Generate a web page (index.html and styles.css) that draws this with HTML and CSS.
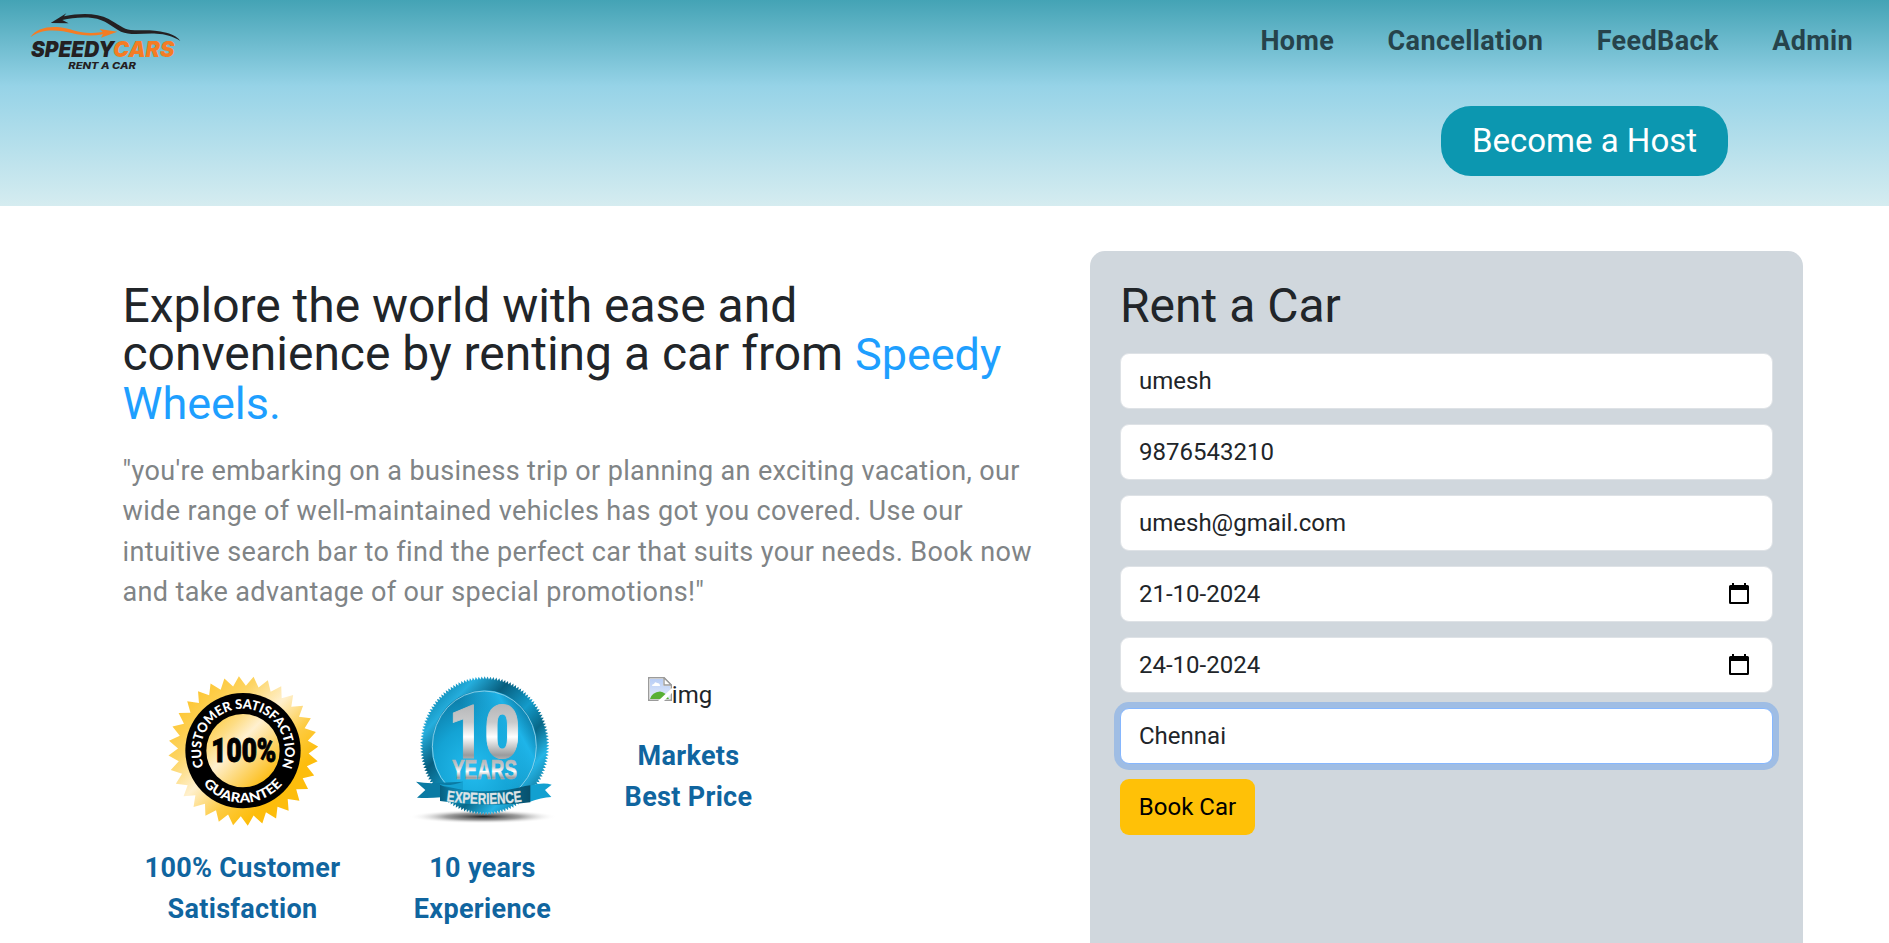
FILE: index.html
```html
<!DOCTYPE html>
<html lang="en">
<head>
<meta charset="utf-8">
<title>Speedy Cars</title>
<link rel="stylesheet" href="styles.css">
</head>
<body>
<header class="header">
  <nav class="nav">
    <svg class="logo" viewBox="84 30 468 189">
      <path d="M152 69L199 40L192 49C245 38 293 40 326 57C354 72 370 88 392 90C430 92 460 87 499 98C522 104 536 114 541 123C520 108 495 102 470 101C430 99 390 107 363 95C335 81 318 59 277 54C243 50 212 55 187 60L206 70Z" fill="#242022"/>
      <path d="M91 112C105 88 137 79 172 81C210 84 240 101 276 99C290 98 300 97 308 96L299 87L352 95L303 113L309 103C275 109 245 107 218 100C178 89 124 84 91 112Z" fill="#f57c24"/>
      <text class="logo-name" x="93" y="171" textLength="250" lengthAdjust="spacingAndGlyphs" fill="#242022">SPEEDY</text>
      <text class="logo-name" x="339" y="171" textLength="184" lengthAdjust="spacingAndGlyphs" fill="#f57c24">CARS</text>
      <text class="logo-sub" x="205" y="207" textLength="203" lengthAdjust="spacingAndGlyphs">RENT A CAR</text>
    </svg>
    <div class="links"><a>Home</a><a>Cancellation</a><a>FeedBack</a><a>Admin</a></div>
  </nav>
  <button class="host">Become a Host</button>
</header>
<main class="main">
  <section class="intro">
    <h1 class="title">Explore the world with ease and<br>convenience by renting a car from <span class="brand">Speedy<br>Wheels.</span></h1>
    <p class="lead">"you're embarking on a business trip or planning an exciting vacation, our<br>wide range of well-maintained vehicles has got you covered. Use our<br>intuitive search bar to find the perfect car that suits your needs. Book now<br>and take advantage of our special promotions!"</p>
    <div class="badges">
      <figure class="badge">
        <svg class="seal" viewBox="54 48 450 450">
          <defs>
            <linearGradient id="gold" x1="0" y1="0" x2="1" y2="1">
              <stop offset=".1" stop-color="#fdd050"/><stop offset=".25" stop-color="#fddc83"/><stop offset=".42" stop-color="#fff0cf"/><stop offset=".6" stop-color="#fddb83"/><stop offset=".85" stop-color="#fdbf1c"/>
            </linearGradient>
            <linearGradient id="rim" x1="0" y1="0" x2="1" y2="1">
              <stop offset=".15" stop-color="#fdc735"/><stop offset=".3" stop-color="#fdd461"/><stop offset=".46" stop-color="#fff0cd"/><stop offset=".62" stop-color="#fdcb41"/><stop offset=".75" stop-color="#fdbd0c"/>
            </linearGradient>
            <path id="arc-top" d="M162.200 319.200A126 126 0 1 1 394.100 323.200"/>
            <path id="arc-bottom" d="M159.500 372.300A156 156 0 0 0 398.500 372.300"/>
          </defs>
          <polygon id="star" fill="url(#rim)"/>
          <circle cx="279" cy="272" r="173" fill="#000"/>
          <circle cx="279" cy="272" r="110" fill="url(#gold)"/>
          <text class="seal-arc"><textPath href="#arc-top" textLength="494" lengthAdjust="spacingAndGlyphs">CUSTOMER SATISFACTION</textPath></text>
          <text class="seal-arc"><textPath href="#arc-bottom" textLength="271" lengthAdjust="spacingAndGlyphs">GUARANTEE</textPath></text>
          <text class="seal-number" x="184" y="306" textLength="195" lengthAdjust="spacingAndGlyphs">100%</text>
        </svg>
        <figcaption>100% Customer<br>Satisfaction</figcaption>
      </figure>
      <figure class="badge">
        <svg class="seal" viewBox="25 48 450 450">
          <defs>
            <linearGradient id="ring" x1="0" y1="0" x2="1" y2="1">
              <stop offset=".1" stop-color="#0b83ad"/><stop offset=".22" stop-color="#25aedd"/><stop offset=".36" stop-color="#075e7e"/><stop offset=".52" stop-color="#139bca"/><stop offset=".64" stop-color="#086888"/><stop offset=".76" stop-color="#26b5e6"/><stop offset=".9" stop-color="#086d90"/>
            </linearGradient>
            <radialGradient id="disc" cx=".4" cy=".7" r=".75">
              <stop offset="0" stop-color="#23bdf0"/><stop offset=".5" stop-color="#14a3d4"/><stop offset="1" stop-color="#0a7099"/>
            </radialGradient>
            <linearGradient id="glow" x1="0" y1=".8" x2="1" y2=".2">
              <stop offset=".5" stop-color="#20b9ee" stop-opacity="0"/><stop offset=".8" stop-color="#20b9ee" stop-opacity=".9"/><stop offset="1" stop-color="#0b82ae" stop-opacity=".2"/>
            </linearGradient>
            <linearGradient id="metal" x1="0" y1="0" x2="0" y2="1">
              <stop offset=".15" stop-color="#b3b4b6"/><stop offset=".38" stop-color="#c9cacb"/><stop offset=".55" stop-color="#fff"/><stop offset=".76" stop-color="#999b9d"/><stop offset=".9" stop-color="#d5d6d7"/>
            </linearGradient>
            <linearGradient id="ribbon">
              <stop offset="0" stop-color="#075f80"/><stop offset=".2" stop-color="#0f8ab5"/><stop offset=".5" stop-color="#0c7ba2"/><stop offset=".85" stop-color="#075e7f"/><stop offset="1" stop-color="#07506c"/>
            </linearGradient>
            <radialGradient id="shadow"><stop offset="0" stop-color="#222"/><stop offset=".5" stop-color="#777" stop-opacity=".7"/><stop offset="1" stop-color="#fff" stop-opacity="0"/></radialGradient>
          </defs>
          <ellipse cx="250" cy="470" rx="222" ry="21" fill="url(#shadow)"/>
          <polygon id="cog" fill="url(#ring)"/>
          <ellipse cx="254" cy="260" rx="158" ry="169" fill="url(#disc)"/>
          <ellipse cx="254" cy="260" rx="158" ry="169" fill="url(#glow)"/>
          <ellipse cx="254" cy="260" rx="156" ry="167" fill="none" stroke="#9bd6ea" stroke-width="2.500"/>
          <path d="M49 365Q85 372 124 368L190 365L190 388L124 412Q85 416 52 413L77 390Z" fill="#0b7ba4"/>
          <path d="M389 377Q432 366 456 374L436 390L455 411Q425 412 389 426Z" fill="#12a0d0"/>
          <path d="M121 373Q150 380 190 365L190 390L121 376Z" fill="#15a2d2"/>
          <path d="M121 374Q145 388 190 390Q300 401 376 378L392 376V427Q255 443 121 423Z" fill="url(#ribbon)"/>
          <text class="ten" x="146" y="294" textLength="216" lengthAdjust="spacingAndGlyphs">10</text>
          <text class="years" x="157" y="357" textLength="195" lengthAdjust="spacingAndGlyphs">YEARS</text>
          <path id="arc-exp" d="M140 424Q255 440 372 424" fill="none"/>
          <text class="exp"><textPath href="#arc-exp" textLength="228" lengthAdjust="spacingAndGlyphs">EXPERIENCE</textPath></text>
        </svg>
        <figcaption>10 years<br>Experience</figcaption>
      </figure>
      <figure class="badge">
        <div class="missing">
          <svg class="missing-icon" viewBox="0 0 24 24">
            <defs><linearGradient id="sky" x1="0" y1="0" x2="0" y2="1"><stop offset="0" stop-color="#b8cdf5"/><stop offset="1" stop-color="#e3ecfc"/></linearGradient></defs>
            <path d="M.7.7H16L23.300 8V23.300H.7Z" fill="#fff" stroke="#9b9b9b" stroke-width="1.400"/>
            <path d="M2 2H15V9H22V22H2Z" fill="url(#sky)"/>
            <path d="M4 9Q4 7 6 7Q7 4 9 6Q12 6 12 9Z" fill="#fff"/>
            <path d="M2 22Q4 15 12 14.500Q18 15 21 22Z" fill="#58b035"/>
            <path d="M16 .7V8H23.300Z" fill="#fff" stroke="#9b9b9b" stroke-width="1.400"/>
            <path d="M10 24L24 11V16L16 24Z" fill="#fff"/>
          </svg><span>img</span>
        </div>
        <figcaption>Markets<br>Best Price</figcaption>
      </figure>
    </div>
  </section>
  <form class="card">
    <h2 class="title">Rent a Car</h2>
    <div class="field">umesh</div>
    <div class="field">9876543210</div>
    <div class="field">umesh@gmail.com</div>
    <div class="field"><span>21-10-2024</span><svg class="cal" viewBox="0 0 20 21"><path d="M3 0H5V2H15V0H17V2H18.500Q20 2 20 3.500V19.500Q20 21 18.500 21H1.500Q0 21 0 19.500V3.500Q0 2 1.500 2H3ZM2 7V19H18V7Z" fill-rule="evenodd"/></svg></div>
    <div class="field"><span>24-10-2024</span><svg class="cal" viewBox="0 0 20 21"><path d="M3 0H5V2H15V0H17V2H18.500Q20 2 20 3.500V19.500Q20 21 18.500 21H1.500Q0 21 0 19.500V3.500Q0 2 1.500 2H3ZM2 7V19H18V7Z" fill-rule="evenodd"/></svg></div>
    <div class="field field-focus">Chennai</div>
    <button class="book" type="button">Book Car</button>
  </form>
</main>
<script src="badges.js"></script>
</body>
</html>
```
FILE: badges.js
```js
// Builds the toothed outline of a seal; inset is the depth of each notch.
function teeth(id, cx, cy, rx, ry, inset, count, phase) {
  const pts = [];
  for (let i = 0; i < count * 2; i++) {
    const a = phase * Math.PI / 180 + i * Math.PI / count;
    const d = i % 2 ? inset : 0;
    pts.push((cx + (rx - d) * Math.cos(a)).toFixed(1) + ',' + (cy + (ry - d) * Math.sin(a)).toFixed(1));
  }
  document.getElementById(id).setAttribute('points', pts.join(' '));
}
teeth('star', 280, 273, 225, 225, 29, 32, -93.4);
teeth('cog', 255, 257, 194, 208, 9, 136, -90);
```
FILE: styles.css
```css
* { box-sizing: border-box; }
body {
  margin: 0;
  height: 943px;
  overflow: hidden;
  background: #fff;
  color: #212529;
  font: 24px/36px Roboto, sans-serif;
}
.header {
  height: 206px;
  background: linear-gradient(#44a3b5 0, #96d3e7 86px, #d5ecf0 206px);
}
.nav {
  height: 86px;
  padding: 10px 36px 0 28px;
  display: flex;
  justify-content: space-between;
}
.logo { width: 156px; height: 63px; }
.logo-name { font: italic 900 64px Inter, sans-serif; }
.logo-sub { font: italic 800 28px Inter, sans-serif; fill: #242022; }
.links {
  display: flex;
  gap: 53.500px;
  padding-top: 11px;
  font-weight: 700;
  font-size: 27px;
  line-height: 40px;
  letter-spacing: .36px;
  color: #26434b;
}
.host {
  display: block;
  width: 287px;
  height: 70px;
  margin: 20px 161px 0 auto;
  padding: 0 0 2px;
  border: 0;
  border-radius: 30px;
  background: #0c97b0;
  color: #fff;
  font: 33px Roboto, sans-serif;
}
.main {
  display: grid;
  grid-template-columns: 967.5px 713px;
  padding: 45px 0 0 122.5px;
}
.intro { padding-top: 31px; }
.title {
  margin: 0;
  font-weight: 400;
  font-size: 48px;
  line-height: 48px;
  white-space: nowrap;
}
.brand { color: #1e9fff; font-size: 45px; }
.lead {
  margin: 22.5px 0 0;
  color: #808486;
  font-size: 27px;
  line-height: 40.5px;
  letter-spacing: .365px;
  white-space: nowrap;
}
.intro .title { letter-spacing: -.02px; }
.badges {
  display: grid;
  grid-template-columns: 240px 240px 172px;
  margin-top: 63.5px;
}
.badge { margin: 0; text-align: center; }
.seal { display: block; width: 150px; height: 150px; margin: 0 auto 22px; }
.badge figcaption {
  color: #10659f;
  font-weight: 700;
  font-size: 27px;
  line-height: 40.5px;
  letter-spacing: .32px;
}
.seal-arc { font: 900 40px Lato, sans-serif; fill: #fff; }
.seal-number { font: 900 101px Roboto, sans-serif; stroke: #000; stroke-width: 3px; }
.years, .exp { font-family: "Liberation Sans", sans-serif; font-weight: 700; fill: url(#metal); }
.ten { font: 900 222px Roboto, sans-serif; fill: url(#metal); stroke: url(#metal); stroke-width: 3px; }
.years { font-size: 81px; stroke: url(#metal); stroke-width: 2px; }
.exp { font-size: 47px; fill: #dfe4e7; stroke: #dfe4e7; stroke-width: 1px; }
.missing { display: flex; justify-content: center; height: 60px; padding-right: 17px; line-height: 38px; }
.missing-icon { width: 24px; height: 24px; margin-top: 1px; }
.card {
  height: 692px;
  padding: 31px 30px 0;
  border-radius: 15px 15px 0 0;
  background: #d0d7dd;
}
.card .title { margin-bottom: 23px; }
.field {
  display: flex;
  align-items: center;
  justify-content: space-between;
  height: 56px;
  margin-bottom: 15px;
  padding: 0 23px 1px 18px;
  border: 1px solid #dee2e6;
  border-radius: 9px;
  background: #fff;
}
.field-focus { border-color: #86b7fe; box-shadow: 0 0 0 6px rgba(13, 110, 253, .25); }
.cal { width: 20px; height: 21px; fill: #000; }
.book {
  width: 135px;
  height: 56px;
  padding: 0;
  border: 0;
  border-radius: 9px;
  background: #ffc107;
  color: #000;
  font: 24px Roboto, sans-serif;
}
```
